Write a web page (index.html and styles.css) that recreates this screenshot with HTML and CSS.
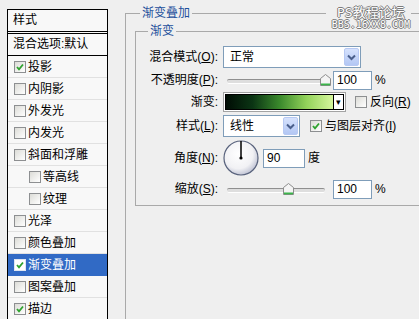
FILE: index.html
```html
<!DOCTYPE html>
<html>
	<head>
		<meta charset="UTF-8">
		<title>图层样式</title>
		<link rel="stylesheet" href="styles.css">
	</head>
	<body>
		<div class="styles">
			<div class="styles-head">样式</div>
			<div class="styles-blend">混合选项:默认</div>
			<ul class="effects">
				<li><span class="check"><svg width="8" height="8" viewBox="0 0 8 8"><path d="M1 4 L3 6.3 L7 1.5" fill="none" stroke="#2fa32f" stroke-width="1.8"/></svg></span>投影</li>
				<li><span class="check"></span>内阴影</li>
				<li><span class="check"></span>外发光</li>
				<li><span class="check"></span>内发光</li>
				<li><span class="check"></span>斜面和浮雕</li>
				<li class="sub"><span class="check"></span>等高线</li>
				<li class="sub"><span class="check"></span>纹理</li>
				<li><span class="check"></span>光泽</li>
				<li><span class="check"></span>颜色叠加</li>
				<li class="selected"><span class="check"><svg width="8" height="8" viewBox="0 0 8 8"><path d="M1 4 L3 6.3 L7 1.5" fill="none" stroke="#2fa32f" stroke-width="1.8"/></svg></span>渐变叠加</li>
				<li><span class="check"></span>图案叠加</li>
				<li class="last"><span class="check"><svg width="8" height="8" viewBox="0 0 8 8"><path d="M1 4 L3 6.3 L7 1.5" fill="none" stroke="#2fa32f" stroke-width="1.8"/></svg></span>描边</li>
			</ul>
		</div>

		<div class="main">
			<fieldset class="group outer">
				<legend>渐变叠加</legend>
				<fieldset class="group inner">
					<legend>渐变</legend>
					<div class="form">
						<div class="row r1">
							<label>混合模式(<u>O</u>):</label>
							<div class="ctl">
								<div class="select wide"><span>正常</span><span class="drop"><svg width="9" height="7" viewBox="0 0 9 7"><path d="M1 1.5 L4.5 5 L8 1.5" fill="none" stroke="#4a5f8c" stroke-width="2"/></svg></span></div>
							</div>
						</div>
						<div class="row r2">
							<label>不透明度(<u>P</u>):</label>
							<div class="ctl">
								<div class="slider"><span class="thumb" style="left:97px"><svg width="11" height="12" viewBox="0 0 11 12"><path d="M0.5 4.5 L5.5 0.5 L10.5 4.5 L10.5 11.5 L0.5 11.5 Z" fill="#f4f4f4" stroke="#8c8c8c"/><rect x="1" y="9.5" width="9" height="1.8" fill="#3bb54a"/></svg></span></div>
								<div class="num">100</div>
								<span class="unit">%</span>
							</div>
						</div>
						<div class="row r3">
							<label>渐变:</label>
							<div class="ctl">
								<div class="gradpick"><span class="swatch"></span><span class="pick-arrow">▾</span></div>
								<span class="check gap"></span>
								<span class="check-text">反向(<u>R</u>)</span>
							</div>
						</div>
						<div class="row r4">
							<label>样式(<u>L</u>):</label>
							<div class="ctl">
								<div class="select narrow"><span>线性</span><span class="drop"><svg width="9" height="7" viewBox="0 0 9 7"><path d="M1 1.5 L4.5 5 L8 1.5" fill="none" stroke="#4a5f8c" stroke-width="2"/></svg></span></div>
								<span class="check gap"><svg width="8" height="8" viewBox="0 0 8 8"><path d="M1 4 L3 6.3 L7 1.5" fill="none" stroke="#2fa32f" stroke-width="1.8"/></svg></span>
								<span class="check-text">与图层对齐(<u>I</u>)</span>
							</div>
						</div>
						<div class="row r5">
							<label>角度(<u>N</u>):</label>
							<div class="ctl">
								<svg class="dial" width="36" height="36" viewBox="0 0 36 36">
									<defs>
										<radialGradient id="dg" cx="42%" cy="38%" r="62%">
											<stop offset="0" stop-color="#ffffff"/>
											<stop offset="0.7" stop-color="#f1f1f4"/>
											<stop offset="1" stop-color="#c3c6d6"/>
										</radialGradient>
									</defs>
									<circle cx="18" cy="18" r="17" fill="url(#dg)" stroke="#58627c" stroke-width="1.2"/>
									<line x1="18" y1="18" x2="18" y2="1" stroke="#000" stroke-width="1.5"/>
									<circle cx="18" cy="18" r="1.6" fill="#000"/>
								</svg>
								<div class="num angle">90</div>
								<span class="unit">度</span>
							</div>
						</div>
						<div class="row r6">
							<label>缩放(<u>S</u>):</label>
							<div class="ctl">
								<div class="slider"><span class="thumb" style="left:60px"><svg width="11" height="12" viewBox="0 0 11 12"><path d="M0.5 4.5 L5.5 0.5 L10.5 4.5 L10.5 11.5 L0.5 11.5 Z" fill="#f4f4f4" stroke="#8c8c8c"/><rect x="1" y="9.5" width="9" height="1.8" fill="#3bb54a"/></svg></span></div>
								<div class="num">100</div>
								<span class="unit">%</span>
							</div>
						</div>
					</div>
				</fieldset>
			</fieldset>
		</div>

		<div class="mark">
			<div class="mark-1">PS教程论坛</div>
			<div class="mark-2">BBS.16XX8.COM</div>
		</div>
	</body>
</html>
```

FILE: styles.css
```css
*{margin: 0;padding: 0;box-sizing: border-box;}
li{list-style: none;}
html,body{width: 419px;height: 319px;overflow: hidden;}
body{background: #efefef;color: #000;font: 12px/16px "Liberation Sans","Noto Sans CJK SC",sans-serif;display: flex;align-items: flex-start;position: relative;}

/* left list, cut off by the bottom edge */
.styles{flex: none;width: 101px;height: 310px;margin: 9px 0 0 7px;border: 1px solid #000;border-bottom: none;background: #f8f8f8;overflow: hidden;}
.styles-head{height: 24px;line-height: 21px;padding-left: 5px;border-bottom: 3px double #000;}
.styles-blend{height: 22px;line-height: 21px;padding-left: 5px;border-bottom: 1px solid #000;}
.effects>li{height: 22px;display: flex;align-items: center;gap: 2px;padding-left: 6px;border-bottom: 1px solid #e1e1e1;}
.effects>li.last{height: 21px;border-bottom: none;}
.effects>li.sub{padding-left: 21px;}
.effects>li.selected{background: #316ac5;color: #fff;border-bottom-color: #316ac5;}

.check{flex: none;width: 12px;height: 12px;border: 1px solid #8d8f91;background: linear-gradient(135deg,#dcdcd7,#fff);display: flex;align-items: center;justify-content: center;}
.selected .check{border-color: #dfe6f2;background: #fff;}

/* right side, cut off by the right and bottom edges */
.main{flex: none;width: 294px;margin-left: 17px;}
.group{border: 1px solid #a9a9a9;border-right: none;}
.group>legend{padding: 0 2px;line-height: 16px;color: #1d4f9c;}
.outer{margin-top: 5px;padding: 2px 0 0 9px;height: 314px;border-bottom: none;}
.outer>legend{margin-left: 5px;}
.inner{padding: 7px 0 5px 0;}
.inner>legend{margin-left: 12px;}

.form{display: flex;flex-direction: column;gap: 2px;}
.row{display: grid;grid-template-columns: 82px auto;column-gap: 5px;align-items: center;}
.row>label{text-align: right;white-space: nowrap;}
.r1{height: 22px;}
.r2{height: 20px;}
.r3{height: 20px;}
.r4{height: 24px;}
.r5{height: 36px;}
.r6{height: 22px;}
.ctl{display: flex;align-items: center;white-space: nowrap;}

.select{height: 22px;display: flex;align-items: center;justify-content: space-between;padding: 0 1px 0 6px;border: 1px solid #7f9db9;background: #fff;}
.select.wide{width: 138px;}
.select.narrow{width: 77px;}
.drop{width: 15px;height: 18px;display: flex;align-items: center;justify-content: center;border: 1px solid #b7c9f3;border-radius: 2px;background: linear-gradient(#d6e2fd,#b3c7f4);}

.slider{flex: none;position: relative;width: 106px;height: 14px;}
.slider::before{content: "";position: absolute;left: 4px;right: 4px;top: 6px;height: 3px;border-top: 1px solid #8f8f8f;border-bottom: 1px solid #fff;background: #dedede;border-radius: 2px;}
.thumb{position: absolute;top: 1px;display: block;width: 11px;height: 12px;}
.thumb svg{display: block;}

.num{flex: none;width: 39px;height: 19px;margin-left: 4px;padding-left: 3px;line-height: 17px;border: 1px solid #7f9db9;background: #fff;}
.num.angle{width: 42px;}
.unit{margin-left: 3px;}

.gradpick{flex: none;width: 123px;height: 20px;display: flex;padding: 1px;border: 1px solid #a3a3a3;background: #fff;}
.swatch{flex: 1;border: 1px solid #000;background: linear-gradient(to right,#000c04 0%,#0b3514 25%,#3a892c 50%,#92d25a 75%,#d6f69c 100%);}
.pick-arrow{width: 10px;border: 1px solid #000;border-left: none;background: #fff;font-size: 9px;line-height: 14px;text-align: center;}
.check.gap{margin-left: 9px;}
.r4 .check.gap{margin-left: 10px;}
.check-text{margin-left: 3px;}
.dial{flex: none;display: block;}

/* watermark */
.mark{position: absolute;top: 6px;right: 8px;padding: 0 1px 0 6px;background: #efefef;color: #fff;text-align: center;text-shadow: -1px 0 #7b7b7b,1px 0 #7b7b7b,0 -1px #7b7b7b,0 1px #7b7b7b;}
.mark-1{font: 13px/14px "DejaVu Sans Mono","Noto Sans CJK SC",monospace;}
.mark-2{font: 10px/10px "DejaVu Sans Mono",monospace;}
```
